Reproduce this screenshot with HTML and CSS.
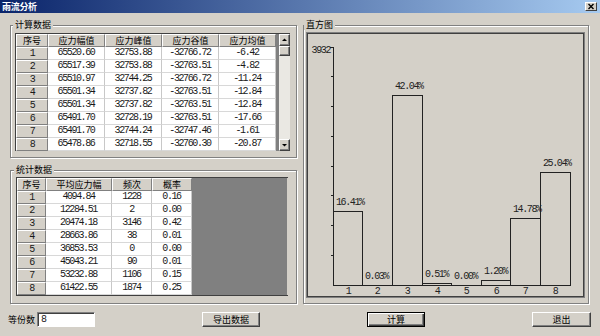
FILE: index.html
```html
<!DOCTYPE html>
<html>
<head>
<meta charset="utf-8">
<title>雨流分析</title>
<link rel="stylesheet" href="styles.css">
</head>
<body>
<div class="window">
  <div class="titlebar">
    <span class="title">雨流分析</span>
    <span class="close"><svg width="10" height="7" viewBox="0 0 10 7"><path d="M2.5 1 L7.5 6 M7.5 1 L2.5 6" stroke="#000" stroke-width="1.4"/></svg></span>
  </div>

  <div class="main">
    <div class="leftcol">
      <!-- 计算数据 -->
      <fieldset class="group g-calc">
        <legend>计算数据</legend>
        <div class="wrap calc-wrap">
          <div class="grid grid-calc">
            <div class="hd">序号</div><div class="hd">应力幅值</div><div class="hd">应力峰值</div><div class="hd">应力谷值</div><div class="hd">应力均值</div>
            <div class="rh n">1</div><div class="td n">65520.60</div><div class="td n">32753.88</div><div class="td n">-32766.72</div><div class="td n">-6.42</div>
            <div class="rh n">2</div><div class="td n">65517.39</div><div class="td n">32753.88</div><div class="td n">-32763.51</div><div class="td n">-4.82</div>
            <div class="rh n">3</div><div class="td n">65510.97</div><div class="td n">32744.25</div><div class="td n">-32766.72</div><div class="td n">-11.24</div>
            <div class="rh n">4</div><div class="td n">65501.34</div><div class="td n">32737.82</div><div class="td n">-32763.51</div><div class="td n">-12.84</div>
            <div class="rh n">5</div><div class="td n">65501.34</div><div class="td n">32737.82</div><div class="td n">-32763.51</div><div class="td n">-12.84</div>
            <div class="rh n">6</div><div class="td n">65491.70</div><div class="td n">32728.19</div><div class="td n">-32763.51</div><div class="td n">-17.66</div>
            <div class="rh n">7</div><div class="td n">65491.70</div><div class="td n">32744.24</div><div class="td n">-32747.46</div><div class="td n">-1.61</div>
            <div class="rh n">8</div><div class="td n">65478.86</div><div class="td n">32718.55</div><div class="td n">-32760.30</div><div class="td n">-20.87</div>
          </div>
          <div class="space strip"></div>
          <div class="vscroll">
            <div class="sbtn"><svg width="9" height="10" viewBox="0 0 9 10"><polygon points="2,6 7,6 4.5,3.5" fill="#000"/></svg></div>
            <div class="thumb"></div>
            <div class="track"></div>
            <div class="sbtn"><svg width="9" height="10" viewBox="0 0 9 10"><polygon points="2,4 7,4 4.5,6.5" fill="#000"/></svg></div>
          </div>
        </div>
      </fieldset>

      <!-- 统计数据 -->
      <fieldset class="group g-stat">
        <legend>统计数据</legend>
        <div class="wrap stat-wrap">
          <div class="grid grid-stat">
            <div class="hd">序号</div><div class="hd">平均应力幅</div><div class="hd">频次</div><div class="hd">概率</div>
            <div class="rh n">1</div><div class="td n">4094.84</div><div class="td n">1228</div><div class="td n">0.16</div>
            <div class="rh n">2</div><div class="td n">12284.51</div><div class="td n">2</div><div class="td n">0.00</div>
            <div class="rh n">3</div><div class="td n">20474.18</div><div class="td n">3146</div><div class="td n">0.42</div>
            <div class="rh n">4</div><div class="td n">28663.86</div><div class="td n">38</div><div class="td n">0.01</div>
            <div class="rh n">5</div><div class="td n">36853.53</div><div class="td n">0</div><div class="td n">0.00</div>
            <div class="rh n">6</div><div class="td n">45043.21</div><div class="td n">90</div><div class="td n">0.01</div>
            <div class="rh n">7</div><div class="td n">53232.88</div><div class="td n">1106</div><div class="td n">0.15</div>
            <div class="rh n">8</div><div class="td n">61422.55</div><div class="td n">1874</div><div class="td n">0.25</div>
          </div>
          <div class="space fill"></div>
        </div>
      </fieldset>
    </div>

    <!-- 直方图 -->
    <fieldset class="group g-hist">
      <legend>直方图</legend>
      <div class="chart">
        <svg width="275" height="262" viewBox="0 0 275 262">
          <g class="ticks" stroke="#222" stroke-width="1">
            <line x1="25.5" y1="13" x2="25.5" y2="251.5"/>
            <line x1="25" y1="251.5" x2="262.5" y2="251.5"/>
            <line x1="22" y1="13.5" x2="25" y2="13.5"/>
            <line x1="23" y1="42.5" x2="25" y2="42.5"/>
            <line x1="23" y1="72.5" x2="25" y2="72.5"/>
            <line x1="23" y1="102.5" x2="25" y2="102.5"/>
            <line x1="23" y1="132.5" x2="25" y2="132.5"/>
            <line x1="23" y1="161.5" x2="25" y2="161.5"/>
            <line x1="23" y1="191.5" x2="25" y2="191.5"/>
            <line x1="23" y1="221.5" x2="25" y2="221.5"/>
          </g>
          <g class="bars" fill="none" stroke="#222" stroke-width="1">
            <rect x="25.5" y="177.5" width="29" height="74"/>
            <rect x="84.5" y="61.5" width="30" height="190"/>
            <rect x="114.5" y="249.5" width="29" height="2"/>
            <rect x="173.5" y="246.5" width="29" height="5"/>
            <rect x="202.5" y="184.5" width="30" height="67"/>
            <rect x="232.5" y="138.5" width="30" height="113"/>
          </g>
          <g class="lbl">
            <text x="22" y="19" text-anchor="end">3932</text>
            <text x="28" y="171">16.41%</text>
            <text x="57" y="245">0.03%</text>
            <text x="87" y="55">42.04%</text>
            <text x="117" y="243">0.51%</text>
            <text x="146" y="245">0.00%</text>
            <text x="176" y="240">1.20%</text>
            <text x="205" y="178">14.78%</text>
            <text x="235" y="132">25.04%</text>
          </g>
          <g class="lbl" text-anchor="middle">
            <text x="40" y="260">1</text>
            <text x="69" y="260">2</text>
            <text x="99" y="260">3</text>
            <text x="129" y="260">4</text>
            <text x="158" y="260">5</text>
            <text x="188" y="260">6</text>
            <text x="217" y="260">7</text>
            <text x="247" y="260">8</text>
          </g>
        </svg>
      </div>
    </fieldset>
  </div>

  <div class="bottombar">
    <div class="field">
      <span class="flabel">等份数</span>
      <span class="input n">8</span>
    </div>
    <div class="btn">导出数据</div>
    <div class="btn default">计算</div>
    <div class="btn wide">退出</div>
  </div>
</div>
</body>
</html>
```

FILE: styles.css
```css
body {
	margin: 0;
	background-color: #D4D0C8;
	font-family: "Noto Sans CJK SC", sans-serif;
	font-size: 9px;
	color: #000;
}
.window {
	width: 600px;
	height: 336px;
	overflow: hidden;
}

/* 标题栏 */
.titlebar {
	height: 13px;
	display: flex;
	align-items: center;
	justify-content: space-between;
	padding: 0 3px 0 2px;
	background: linear-gradient(to right, #0A246A, #A6CAF0);
}
.titlebar .title {
	color: #fff;
	font-weight: bold;
	line-height: 13px;
	letter-spacing: -0.3px;
}
.titlebar .close {
	display: flex;
	width: 12px;
	height: 9px;
	box-sizing: border-box;
	background: #D4D0C8;
	border-top: 1px solid #fff;
	border-left: 1px solid #fff;
	border-right: 1px solid #404040;
	border-bottom: 1px solid #404040;
}

.main {
	display: flex;
	gap: 6px;
	padding: 7px 0 0 10px;
}
.leftcol {
	display: flex;
	flex-direction: column;
	gap: 7px;
	width: 287px;
}

/* 分组框 */
.group {
	margin: 0;
	min-width: 0;
	box-sizing: border-box;
	border: 1px solid #808080;
	box-shadow: inset 1px 1px #fff, 1px 1px #fff;
}
.group legend {
	padding: 0 2px;
	margin-left: -2px;
	height: 10px;
	line-height: 10px;
	background: #D4D0C8;
}
.g-calc { width: 287px; padding: 3px 6px 6px 4px; }
.g-stat { width: 287px; padding: 2px 8px 7px 5px; }
.g-hist { width: 286px; padding: 2px 3px 5px 2px; }

/* 表格 */
.wrap {
	display: flex;
	border-top: 1px solid #404040;
	border-left: 1px solid #404040;
}
.stat-wrap { border-bottom: 1px solid #404040; }
.grid {
	display: grid;
	grid-auto-rows: 13px;
}
.grid-calc { grid-template-columns: 32px repeat(4, 57px); }
.grid-stat { grid-template-columns: 29px 66px 40px 40px; }
.grid > div {
	box-sizing: border-box;
	text-align: center;
	white-space: nowrap;
	overflow: hidden;
}
.hd, .rh {
	background: #D4D0C8;
	border-top: 1px solid #fff;
	border-left: 1px solid #fff;
	border-right: 1px solid #808080;
	border-bottom: 1px solid #808080;
	line-height: 11px;
}
.td {
	background: #fff;
	border-right: 1px solid #C8C8C8;
	border-bottom: 1px solid #D8D8D8;
	line-height: 12px;
}
.n {
	font-family: "Liberation Mono", monospace;
	font-size: 10px;
	letter-spacing: -1.4px;
	color: #1a1a1a;
}
.space { background: #808080; }
.strip { width: 3px; }
.fill { width: 95px; }

/* 滚动条 */
.vscroll {
	width: 11px;
	display: flex;
	flex-direction: column;
	background: #EAE8E3;
}
.sbtn, .thumb {
	box-sizing: border-box;
	background: #D4D0C8;
	border-top: 1px solid #fff;
	border-left: 1px solid #fff;
	border-right: 1px solid #404040;
	border-bottom: 1px solid #404040;
	box-shadow: inset -1px -1px #808080;
}
.sbtn { height: 12px; display: flex; }
.thumb { height: 10px; }
.track { flex: 1; }

/* 直方图 */
.chart {
	width: 279px;
	height: 266px;
	box-sizing: border-box;
	border: 1px solid #808080;
	box-shadow: inset 0 0 0 1px #404040;
	padding: 1px;
}
.chart svg { display: block; }
.lbl text {
	font-family: "Liberation Mono", monospace;
	font-size: 10px;
	letter-spacing: -1.4px;
	fill: #222;
}

/* 底部 */
.bottombar {
	display: flex;
	align-items: center;
	gap: 107px;
	height: 15px;
	margin-top: 8px;
	padding-left: 8px;
}
.field {
	display: flex;
	align-items: center;
	gap: 2px;
	width: 87px;
}
.flabel { width: 27px; white-space: nowrap; }
.input {
	width: 58px;
	height: 15px;
	box-sizing: border-box;
	background: #fff;
	border-top: 1px solid #808080;
	border-left: 1px solid #808080;
	border-right: 1px solid #fff;
	border-bottom: 1px solid #fff;
	box-shadow: inset 1px 1px #404040;
	padding-left: 3px;
	line-height: 13px;
}
.btn {
	width: 58px;
	height: 15px;
	box-sizing: border-box;
	background: #D4D0C8;
	border-top: 1px solid #fff;
	border-left: 1px solid #fff;
	border-right: 1px solid #404040;
	border-bottom: 1px solid #404040;
	box-shadow: inset -1px -1px #808080;
	text-align: center;
	line-height: 13px;
}
.btn.default {
	border: 1px solid #000;
	box-shadow: inset 1px 1px #fff, inset -1px -1px #404040, inset -2px -2px #808080;
}
.btn.wide { width: 59px; }
```
